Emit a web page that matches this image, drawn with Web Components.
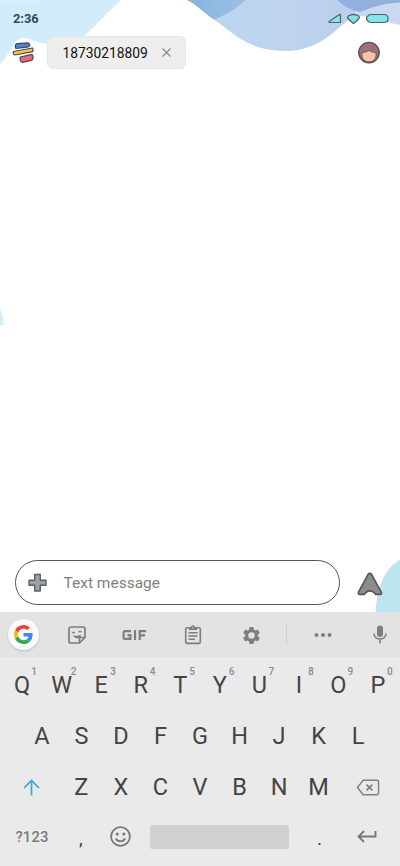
<!DOCTYPE html>
<html lang="en">
<head>
<meta charset="utf-8">
<meta name="viewport" content="width=device-width, initial-scale=1">
<title>Messages</title>
<style>
html,body{margin:0;height:100%;overflow:hidden;background:#fff}
body{font-family:Roboto,"Noto Sans",sans-serif}
</style>
</head>
<body>
<message-app></message-app>
<script>
const define = (name, html) => {
  const t = document.createElement('template');
  t.innerHTML = html;
  customElements.define(name, class extends HTMLElement {
    constructor() {
      super();
      this.attachShadow({ mode: 'open' }).append(t.content.cloneNode(true));
    }
  });
};

define('wave-backdrop', `
<style>:host{position:absolute;inset:0;z-index:-1}svg{display:block}</style>
<svg width="400" height="866" viewBox="0 0 400 866">
  <defs>
    <linearGradient id="a" x1="0" x2="1"><stop offset="0" stop-color="#bdd8f0"/><stop offset="1" stop-color="#bccfec"/></linearGradient>
    <linearGradient id="b" x1="0" x2="1"><stop offset="0" stop-color="#86b2de"/><stop offset="1" stop-color="#9dc0e6"/></linearGradient>
  </defs>
  <path fill="#d3ecfb" d="M0 0H121C109 11 98 23 84 36L70 44H48C36 43 32 38 22 38C13 39 9 57 0 64Z"/>
  <path fill="#daeffc" d="M0 0H37V3H0Z"/>
  <path fill="url(#a)" d="M187 0H356V13C338 27 321 51 285 51C245 51 230 29 213 19C204 13 196 4 187 0Z"/>
  <path fill="url(#b)" d="M187 0H246C238 7 229 14 214 19.500C204 13 196 4 187 0Z"/>
  <path fill="#cbd9f0" d="M350 17C362 6 380 2 400 2V25C384 22 370 16 361 16C354 15 348 21 342 25Z"/>
  <path fill="#93b0de" d="M337 0H400V2.500C382 3 371 8 360 12C350 10 344 6 337 0Z"/>
  <path fill="#d3ecfb" d="M0 307C2 312 3 318 3.500 325H0Z"/>
  <path fill="#bce6ef" d="M400 560C385 567 377 588 375.500 612H400Z"/>
</svg>`);

define('status-bar', `
<style>
:host{display:flex;height:36px;align-items:center;padding:1px 11px 0 13px;box-sizing:border-box;justify-content:space-between;color:#33475a;font-size:12.800px;font-weight:700}
svg{display:block}
</style>
<span>2:36</span>
<svg width="62" height="14" viewBox="0 0 62 14" fill="#84e6e2" stroke="#50606f" stroke-width="1.200" stroke-linejoin="round">
  <path d="M2 9.500L12.500 2.500Q13.500 2 13.500 3.500V10.500H3Q1.500 10.500 2 9.500Z"/>
  <path d="M20.500 5.500Q21 3 26.500 2.300Q32 3 32.500 5.500Q32 7 26.500 11.500Q21 7 20.500 5.500Z"/>
  <path d="M39.600 5H40.500Q41 2.500 44 2.500H57Q61 2.500 61 6.500T57 10.500H44Q41 10.500 40.500 8H39.600Z"/>
</svg>`);

define('contact-tab', `
<style>
:host{display:flex;box-sizing:border-box;width:139px;height:33px;align-items:center;justify-content:space-between;padding:0 14px 0 14.500px;border:1px solid #e6e6e6;border-radius:6px;background:#eee;color:#111;font-size:13.800px}
svg{display:block}
</style>
<slot></slot>
<svg width="9" height="9" viewBox="0 0 9 9" stroke="#888" stroke-width="1.100"><path d="M.5.5L8.500 8.500M8.500.5L.5 8.500"/></svg>`);

define('top-bar', `
<style>
:host{display:flex;height:34px;align-items:center;padding:0 19px 0 12px}
svg{display:block}.menu{margin-right:12px}.face{margin-left:auto}contact-tab{margin-top:-1px}
</style>
<svg class="menu" width="23" height="22" viewBox="0 0 23 22" stroke="#47454d" stroke-width="1.200" stroke-linejoin="round">
  <path fill="#4c87d0" d="M3.500 3Q4 1.800 5.500 1.600L15.500 .9Q17 1 17.500 2.300L17.800 4Q17 5 15 5.200L4 6.500Q2.700 5 3.500 3Z"/>
  <path fill="#f4c653" d="M1.500 9.500L20.500 6Q21.800 8 20.600 9.700L3 13Q.5 12.500 1.500 9.500Z"/>
  <path fill="#f3657f" d="M8.200 15L20 12.300Q21.500 14 21 16.500Q20.500 18 19 18.300L10.500 20.300Q8.500 20 8.200 18Z"/>
</svg>
<contact-tab>18730218809</contact-tab>
<svg class="face" width="24" height="24" viewBox="0 0 24 24">
  <circle cx="12" cy="11.600" r="10.200" fill="#a27074" stroke="#5b5357" stroke-width="1.400"/>
  <path fill="#f8c5a8" stroke="#5b5357" stroke-width=".8" d="M5 11.500Q9.500 11.500 12 9.500Q14.500 11.500 19 11.500V15Q18 20.800 12 20.800Q6 20.800 5 15Z"/>
</svg>`);

define('message-composer', `
<style>
:host{display:flex;height:52px;padding:0 17px 0 15px;box-sizing:border-box;align-items:flex-start;justify-content:space-between}
.field{display:flex;box-sizing:border-box;width:324.500px;height:45px;border:1px solid #555;border-radius:23px;background:#fff;align-items:center;padding-left:11.500px;gap:17px;color:#808080;font-size:15.500px}
.field span{margin-top:1px}
svg{display:block}.send{margin-top:11.500px}
</style>
<div class="field">
  <svg width="19" height="20" viewBox="0 0 19 20"><path fill="#9da0a5" stroke="#5d6167" stroke-width="1.400" stroke-linejoin="round" d="M6.700 1.500H12.300V7.200H18V12.300H12.300V18H6.700V12.300H1V7.200H6.700Z"/></svg>
  <span>Text message</span>
</div>
<svg class="send" width="27" height="24" viewBox="0 0 28 25"><path fill="#8c8c8c" stroke="#555" stroke-width="1.700" stroke-linejoin="round" d="M13 1.800Q14.500 .7 15.800 2L26 20.500Q27.300 23.300 25 23.300H20.500L18 20.800Q14.500 18.500 11 20.800L8.500 23.300H4Q1.500 23.300 2.800 20.500Z"/></svg>`);

define('key-tools', `
<style>
:host{display:flex;height:45px;background:#e3e3e3;align-items:center;color:#7e7e7e}
svg{display:block}
span{display:flex;justify-content:center;flex:none}
.g{width:31px;height:31px;margin-left:8px;border-radius:50%;background:#fafafa;align-items:center;box-shadow:0 1px 2px #bbb}
</style>
<span class="g"><svg width="19" height="19" viewBox="0 0 48 48">
 <path fill="#EA4335" d="M24 9.500c3.540 0 6.710 1.220 9.210 3.600l6.850-6.850C35.900 2.380 30.470 0 24 0 14.620 0 6.510 5.380 2.560 13.220l7.980 6.190C12.430 13.720 17.740 9.500 24 9.500z"/>
 <path fill="#4285F4" d="M46.980 24.550c0-1.570-.15-3.090-.38-4.550H24v9.020h12.940c-.58 2.960-2.260 5.480-4.780 7.180l7.730 6c4.510-4.180 7.090-10.360 7.090-17.650z"/>
 <path fill="#FBBC05" d="M10.530 28.590c-.48-1.450-.76-2.990-.76-4.590s.27-3.140.76-4.590l-7.980-6.190C.92 16.460 0 20.120 0 24c0 3.880.92 7.540 2.560 10.780l7.970-6.190z"/>
 <path fill="#34A853" d="M24 48c6.480 0 11.930-2.130 15.890-5.810l-7.730-6c-2.150 1.450-4.920 2.300-8.160 2.300-6.260 0-11.570-4.220-13.470-9.910l-7.980 6.190C6.510 42.620 14.620 48 24 48z"/>
</svg></span>
<span style="width:76px"><svg width="18" height="18" viewBox="0 0 18 18" fill="none" stroke="currentColor" stroke-width="1.700"><path d="M3 1H15Q17 1 17 3V11.500L11.500 17H3Q1 17 1 15V3Q1 1 3 1ZM11.500 17V11.500H17"/><path stroke-width="1.400" d="M4.200 6.500H7M10.500 6.200Q12 4.600 13.500 6.200"/><path fill="currentColor" stroke="none" d="M5 9.200Q9.500 10.800 13.200 8.500Q12.500 12.300 9.300 12.200Q6.200 12.200 5 9.200Z"/></svg></span>
<span style="width:38px"><svg width="25" height="12" viewBox="0 0 25 12" fill="none" stroke="currentColor" stroke-width="2.200"><path d="M9 2.100H3Q1.600 2.100 1.600 3.500V8.500Q1.600 9.900 3 9.900H8.400V6.200H5.500M13 1V11M17.700 11V2.100H24M17.700 6.300H23"/></svg></span>
<span style="width:80px"><svg width="18" height="20" viewBox="0 0 18 20" fill="none" stroke="currentColor" stroke-width="1.600"><rect x="1.700" y="2.800" width="14.600" height="15.600" rx="1.300"/><path fill="currentColor" stroke="none" d="M5 2.200H6.700Q7.300 .3 9 .3T11.300 2.200H13V5H5Z"/><circle cx="9" cy="2.700" r=".7" fill="#e3e3e3" stroke="none"/><path stroke-width="1.500" d="M4.500 7.800H13.500M4.500 11H13.500M4.500 14.200H11"/></svg></span>
<span style="width:36px;margin-top:1px"><svg width="21" height="21" viewBox="0 0 24 24" fill="currentColor"><path fill-rule="evenodd" d="M19.140 12.940c.04-.3.06-.61.06-.94 0-.32-.02-.64-.07-.94l2.030-1.580a.49.49 0 0 0 .12-.61l-1.920-3.320a.49.490 0 0 0-.59-.22l-2.390.96c-.5-.38-1.030-.7-1.620-.94L14.400 2.810a.48.48 0 0 0-.48-.41h-3.840c-.24 0-.43.17-.47.41l-.36 2.540c-.59.24-1.130.57-1.620.94l-2.390-.96a.48.48 0 0 0-.59.22L2.740 8.870c-.12.21-.08.47.12.61l2.030 1.580c-.05.3-.09.63-.09.94s.02.64.07.94l-2.030 1.580a.49.49 0 0 0-.12.61l1.920 3.320c.12.22.37.29.59.22l2.390-.96c.5.38 1.030.7 1.620.94l.36 2.540c.05.24.24.41.48.41h3.840c.24 0 .44-.17.47-.41l.36-2.540c.59-.24 1.130-.56 1.620-.94l2.390.96c.22.08.47 0 .59-.22l1.920-3.320a.49.49 0 0 0-.12-.61zM12 15.700A3.700 3.700 0 1 1 12 8.300a3.700 3.700 0 0 1 0 7.400z"/></svg></span>
<span style="width:34px"><i style="width:1px;height:21px;background:#d0d0d0"></i></span>
<span style="width:40px"><svg width="18" height="6" viewBox="0 0 18 6" fill="currentColor"><circle cx="2.500" cy="3" r="2"/><circle cx="9" cy="3" r="2"/><circle cx="15.500" cy="3" r="2"/></svg></span>
<span style="width:73px"><svg width="14" height="19" viewBox="0 0 14 19" fill="none" stroke="currentColor" stroke-width="1.500"><rect x="4" y=".5" width="6" height="11.500" rx="3" fill="currentColor" stroke="none"/><path d="M1 8.500Q1.500 14 7 14T13 8.500M7 14V18.500"/></svg></span>`);

define('key-row', `
<style>:host{display:flex;justify-content:center;height:51px}</style><slot></slot>`);

const keyT = document.createElement('template');
keyT.innerHTML = `
<style>
:host{display:flex;position:relative;flex:none;box-sizing:border-box;width:39.550px;align-items:center;justify-content:center;padding-bottom:1px;color:#444;font-size:23.500px;line-height:28px}
:host([wide]){width:59.300px}
:host([small]){font-size:14.800px;font-weight:500;color:#7b7b7b;letter-spacing:.2px;padding:0 0 0 2px}
:host([punct]){font-size:19px;padding:4px 0 0 1px}
sup{position:absolute;right:5px;top:6px;font-size:10px;line-height:12px;font-weight:500;color:#8a8a8a}
sup:empty{display:none}
</style><slot></slot><sup></sup>`;
customElements.define('soft-key', class extends HTMLElement {
  constructor() {
    super();
    this.attachShadow({ mode: 'open' }).append(keyT.content.cloneNode(true));
  }
  connectedCallback() {
    this.shadowRoot.querySelector('sup').textContent = this.getAttribute('hint') || '';
  }
});

const keys = s => [...s].map(c => `<soft-key>${c}</soft-key>`).join('');
define('soft-keyboard', `
<style>
:host{display:block;height:254px;background:#eaeaea}
.rows{padding-top:3px}
svg{display:block}
.space{width:139px;height:24px;border-radius:2px;background:#d1d1d1;margin:12px 10.500px 0}
.last{height:48px}
</style>
<key-tools></key-tools>
<div class="rows">
<key-row>${[...'QWERTYUIOP'].map((c, i) => `<soft-key hint="${(i + 1) % 10}">${c}</soft-key>`).join('')}</key-row>
<key-row>${keys('ASDFGHJKL')}</key-row>
<key-row>
  <soft-key wide><svg width="17" height="17" viewBox="0 0 17 17" fill="none" stroke="#3ba7dc" stroke-width="1.700" style="margin-right:1px"><path d="M8.500 16.500V1.500M1 9L8.500 1.500L16 9"/></svg></soft-key>${keys('ZXCVBNM')}<soft-key wide><svg width="24" height="17" viewBox="0 0 25 17" fill="none" stroke="#808080" stroke-width="1.500"><path d="M7.500 1H22Q23.500 1 23.500 2.500V14.500Q23.500 16 22 16H7.500L1.500 8.500Z"/><path d="M11 5.500L17 11.500M17 5.500L11 11.500" stroke-width="1.800"/></svg></soft-key>
</key-row>
<key-row class="last">
  <soft-key wide small>?123</soft-key><soft-key punct>,</soft-key><soft-key><svg width="21" height="21" viewBox="0 0 21 21" fill="none" stroke="#777" stroke-width="1.800" style="margin-left:1px"><circle cx="10.500" cy="10.500" r="9.400"/><path d="M5.800 12.500Q7.500 15.300 10.500 15.300T15.200 12.500"/><g fill="#777" stroke="none"><circle cx="7.200" cy="8" r="1.500"/><circle cx="13.800" cy="8" r="1.500"/></g></svg></soft-key><div class="space"></div><soft-key punct style="padding-left:0">.</soft-key><soft-key wide><svg width="20" height="13" viewBox="0 0 20 13" fill="none" stroke="#777" stroke-width="1.800" style="margin-right:3px"><path d="M18.500 1V6.500H1.500M7 1L1.500 6.500L7 12"/></svg></soft-key>
</key-row>
</div>`);

define('message-app', `
<style>
:host{display:flex;flex-direction:column;position:relative;z-index:0;width:400px;height:866px;overflow:hidden}
main{flex:1}
</style>
<wave-backdrop></wave-backdrop>
<status-bar></status-bar>
<top-bar></top-bar>
<main></main>
<message-composer></message-composer>
<soft-keyboard></soft-keyboard>`);
</script>
</body>
</html>
